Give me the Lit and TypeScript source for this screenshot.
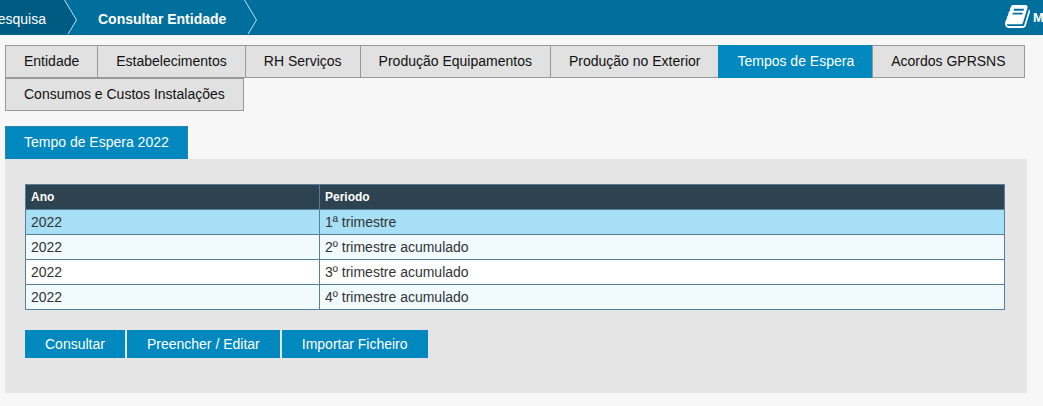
import { LitElement, html, css } from "lit";
import { customElement } from "lit/decorators.js";
import { classMap } from "lit/directives/class-map.js";

@customElement("app-header")
class AppHeader extends LitElement {
  static styles = css`
    :host { display: block; }
    .bar {
      display: flex; align-items: stretch; height: 35px; box-sizing: border-box;
      overflow: hidden; background: #006f9b; color: #fff;
      font: 14px "Liberation Sans", Arial, sans-serif; border-bottom: 1px solid #006791;
      white-space: nowrap;
    }
    .prev { width: 64px; display: flex; justify-content: flex-end; background: #005b82; line-height: 38px; }
    .prev span { padding-right: 18px; }
    .chev { display: block; width: 14px; height: 35px; flex: none; }
    .current { font-weight: bold; line-height: 38px; padding: 0 18px 0 20px; }
    .manual { margin-left: auto; display: flex; width: 38px; flex: none; font-size: 13px; font-weight: bold; line-height: 35px; }
    .book { flex: none; width: 25px; height: 23px; margin-top: 5px; }
    .label { margin-left: 3px; }
  `;
  chevron(fill: string) {
    return html`<svg class="chev" viewBox="0 0 14 35">
      <path d="M0 0H.5L12.5 20 3.5 35H0z" fill=${fill} />
      <path d="M.5 0L12.5 20 3.5 35" fill="none" stroke="#b9e4f5" stroke-width="1" />
    </svg>`;
  }
  render() {
    return html`<nav class="bar">
      <div class="prev"><span>Pesquisa</span></div>
      ${this.chevron("#005b82")}
      <div class="current">Consultar Entidade</div>
      ${this.chevron("none")}
      <div class="manual">
        <svg class="book" viewBox="0 128 1664 1536" preserveAspectRatio="none">
          <path fill="#fff" d="M1639 478q40 57 18 129l-275 906q-19 64-76.500 107.500t-122.500 43.500h-923q-77 0-148.500-53.500t-99.500-131.500q-24-67-2-127 0-4 3-27t4-37q1-8-3-21.500t-3-19.500q2-11 8-21t16.500-23.500 16.500-23.500q23-38 45-91.500t30-91.500q3-10 .5-30t-.5-28q3-11 17-28t17-23q21-36 42-92t25-90q1-9-2.500-32t.5-28q4-13 22-30.500t22-22.500q19-26 42.500-84.500t27.500-96.500q1-8-3-25.500t-2-26.500q2-8 9-18t18-23 17-21q8-12 16.500-30.500t15-35 16-36 19.500-32 26.500-23.500 36-11.500 47.500 5.500l-1 3q38-9 51-9h761q74 0 114 56t18 130l-274 906q-36 119-71.500 153.500t-128.500 34.500h-869q-27 0-38 15-11 16-1 43 24 70 144 70h923q29 0 56-15.500t35-41.500l300-987q7-22 5-57 38 15 59 43zm-1064 2q-4 13 2 22.500t20 9.500h608q13 0 25.500-9.500t16.500-22.500l21-64q4-13-2-22.500t-20-9.500h-608q-13 0-25.500 9.500t-16.500 22.500zm-83 256q-4 13 2 22.500t20 9.500h608q13 0 25.500-9.500t16.500-22.500l21-64q4-13-2-22.500t-20-9.500h-608q-13 0-25.500 9.500t-16.500 22.500z" />
        </svg>
        <span class="label">Manual</span>
      </div>
    </nav>`;
  }
}

@customElement("app-root")
class AppRoot extends LitElement {
  static styles = css`
    :host {
      display: block; height: 406px; overflow: hidden; background: #f7f7f7;
      font: 14px "Liberation Sans", Arial, sans-serif; color: #111;
    }
    .content { padding: 10px 16px 0 5px; }
    .tabs { display: flex; flex-wrap: wrap; }
    .tab {
      box-sizing: border-box; height: 33px; line-height: 31px; padding: 0 18px;
      border: 1px solid #999; margin-right: -1px; background: #e1e1e1; white-space: nowrap;
    }
    .active { background: #0088bf; border-color: #0088bf; color: #fff; }
    .sub { margin-top: 15px; display: flex; }
    .sub .active { border-color: #3285a9; border-bottom-color: #0088bf; }
    .panel { box-sizing: border-box; height: 234px; background: #e5e5e5; padding: 25px 22px 0 20px; }
    .grid { width: 980px; border-collapse: separate; border-spacing: 0; table-layout: fixed; border: solid #577f99; border-width: 1px 0 0 1px; }
    .grid col.year { width: 294px; }
    .grid th, .grid td {
      box-sizing: border-box; height: 25px; padding: 0 5px; line-height: 24px; text-align: left;
      border: solid #577f99; border-width: 0 1px 1px 0; color: #333;
    }
    .grid th { background: #2e4351; color: #fff; font-size: 12px; }
    .row { background: #fff; }
    .even { background: #f0faff; }
    .selected { background: #a6dff6; }
    .actions { display: flex; gap: 2px; margin-top: 20px; }
    .actions button {
      height: 28px; border: 0; padding: 0 20px; background: #0088bf; color: #fff;
      font: 14px/28px "Liberation Sans", Arial, sans-serif;
    }
  `;
  tabs = ["Entidade", "Estabelecimentos", "RH Serviços", "Produção Equipamentos", "Produção no Exterior",
    "Tempos de Espera", "Acordos GPRSNS", "Consumos e Custos Instalações"];
  periods = ["1ª trimestre", "2º trimestre acumulado", "3º trimestre acumulado", "4º trimestre acumulado"];
  actions = ["Consultar", "Preencher / Editar", "Importar Ficheiro"];
  render() {
    return html`<app-header></app-header>
      <main class="content">
        <div class="tabs">
          ${this.tabs.map((t) => html`<div class=${classMap({ tab: true, active: t === "Tempos de Espera" })}>${t}</div>`)}
        </div>
        <div class="sub"><div class="tab active">Tempo de Espera 2022</div></div>
        <section class="panel">
          <table class="grid">
            <colgroup><col class="year" /><col /></colgroup>
            <thead><tr><th>Ano</th><th>Periodo</th></tr></thead>
            <tbody>
              ${this.periods.map((p, i) => html`<tr class=${classMap({ row: true, even: i % 2 === 1, selected: i === 0 })}>
                <td>2022</td><td>${p}</td></tr>`)}
            </tbody>
          </table>
          <div class="actions">${this.actions.map((a) => html`<button>${a}</button>`)}</div>
        </section>
      </main>`;
  }
}
